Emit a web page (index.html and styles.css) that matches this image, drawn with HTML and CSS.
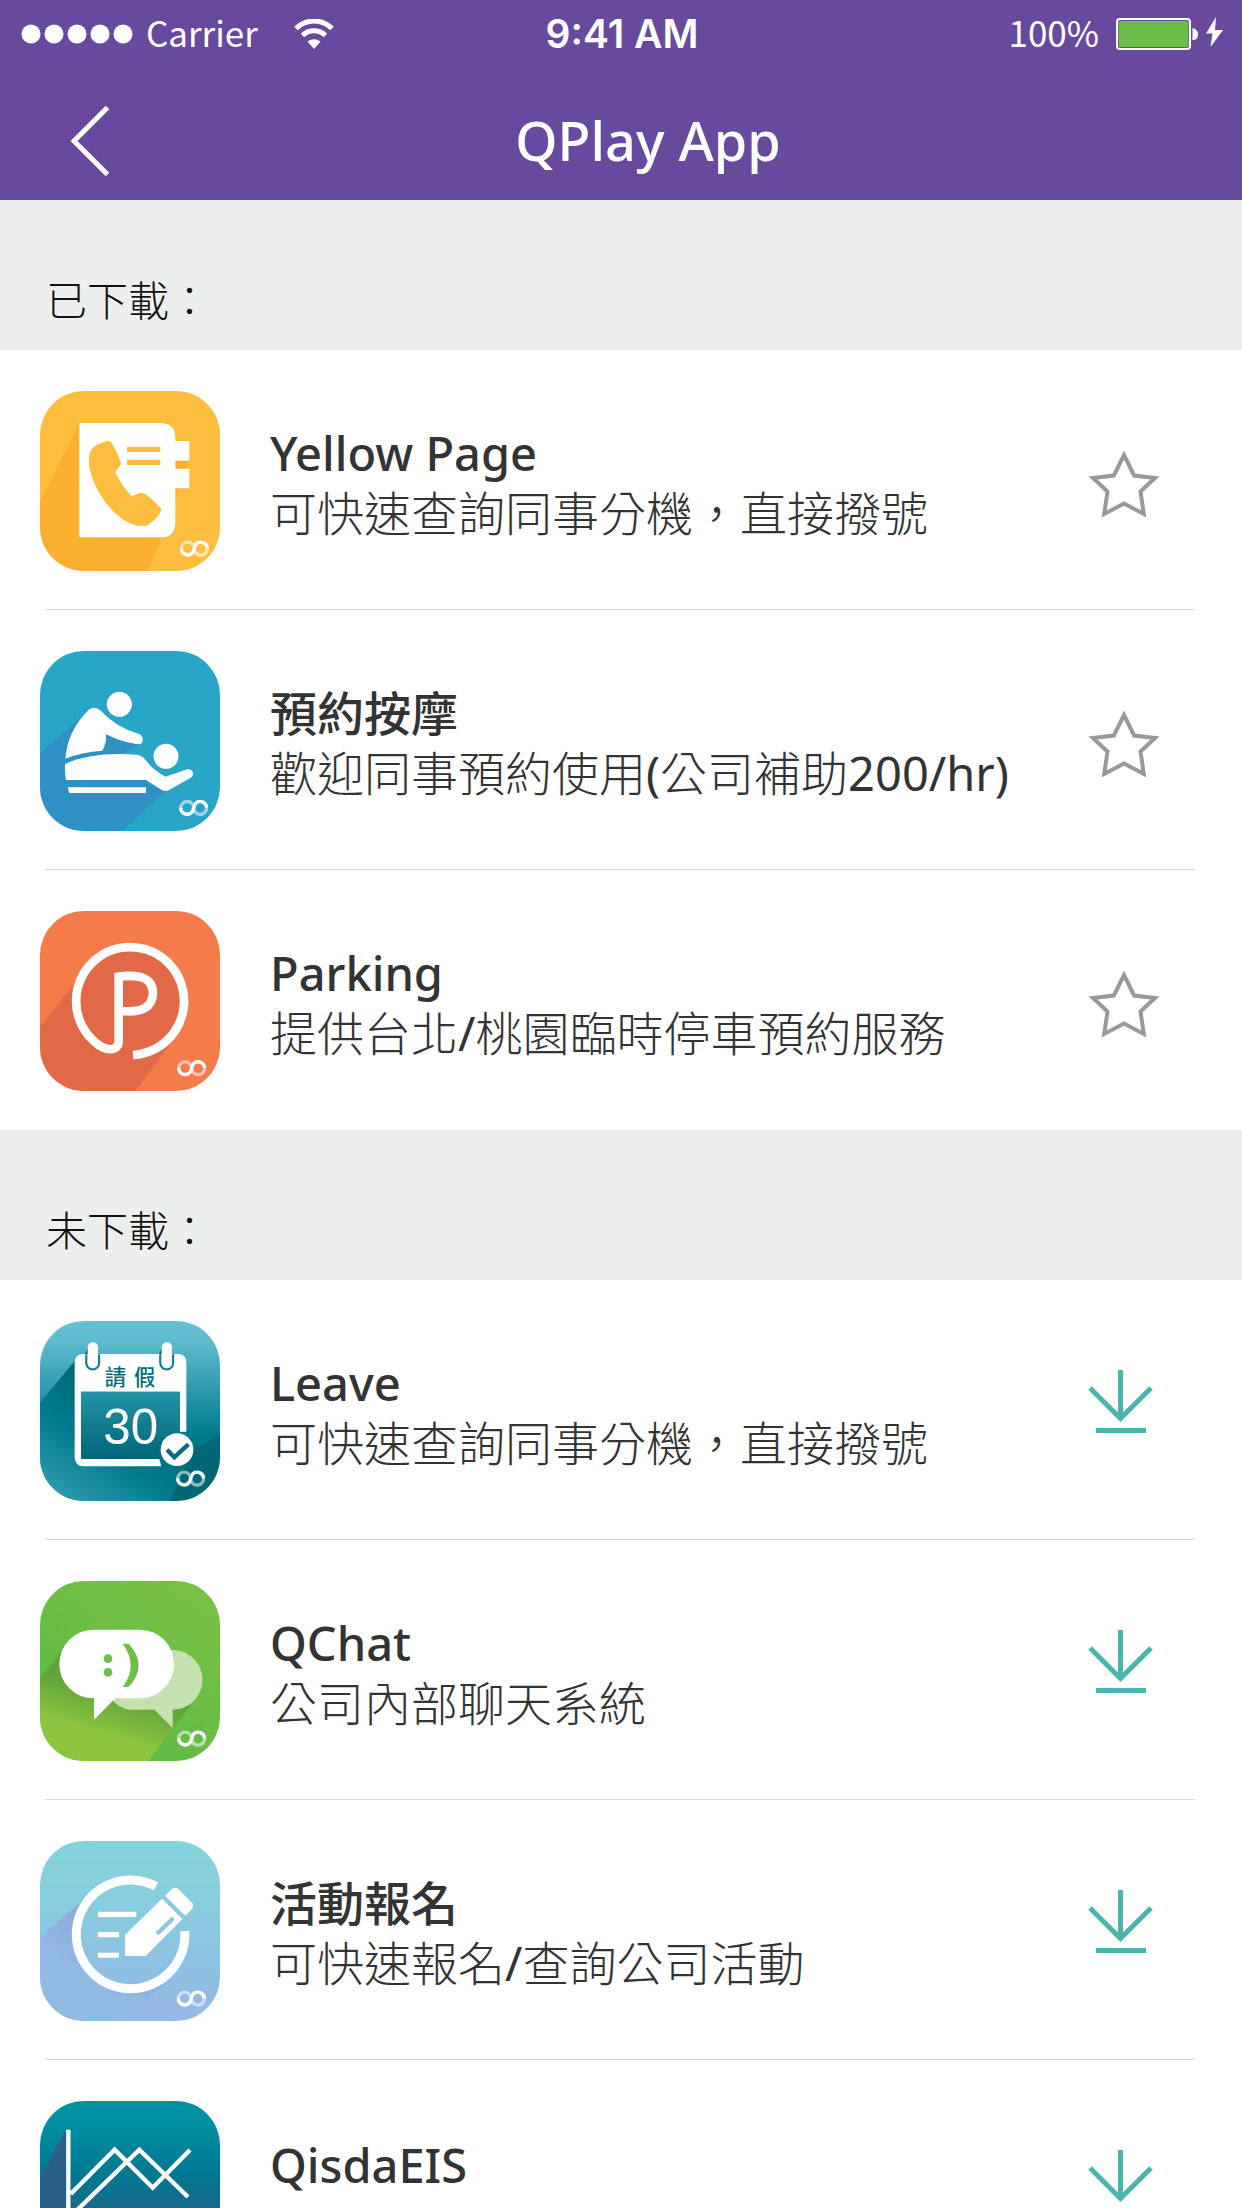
FILE: index.html
```html
<!DOCTYPE html>
<html lang="zh-Hant">
<head>
<meta charset="utf-8">
<meta name="viewport" content="width=device-width, initial-scale=1">
<title>QPlay App</title>
<link rel="stylesheet" href="styles.css">
</head>
<body>
<svg class="defs" aria-hidden="true">
  <symbol id="loop" viewBox="0 0 88 50">
    <g fill="none" stroke="#fff" stroke-width="10">
      <g opacity=".55"><circle cx="24.500" cy="25" r="19.500"/><circle cx="63.500" cy="25" r="19.500"/></g>
      <path d="M5 24A19.500 19.500 0 0 0 38 38C46 30 42 20 50 11A19.500 19.500 0 0 1 83 24"/>
    </g>
  </symbol>
  <symbol id="star" viewBox="0 0 74 84">
    <path d="M37 16L47.200 36.600L68 39L53.500 52.500L56.800 75L37 64.500L17.200 75L20.500 52.500L6 39L26.800 36.600Z" fill="none" stroke="#999" stroke-width="4"/>
  </symbol>
  <symbol id="download" viewBox="0 0 74 84">
    <path d="M33.500 1V49M3 19L33.500 49.500L64 19M9 61.500H59" fill="none" stroke="#4ab5ab" stroke-width="5"/>
  </symbol>
</svg>

<div class="app">
  <header class="header">
    <div class="status">
      <div class="status-side">
        <svg class="signal" viewBox="0 0 114 20" aria-hidden="true"><g fill="#fff"><circle cx="10" cy="10" r="9.500"/><circle cx="33" cy="10" r="9.500"/><circle cx="56" cy="10" r="9.500"/><circle cx="79" cy="10" r="9.500"/><circle cx="102" cy="10" r="9.500"/></g></svg>
        <span class="carrier">Carrier</span>
        <svg class="wifi" viewBox="0 0 40 30" aria-hidden="true"><path d="M2 9.500A25.500 25.500 0 0 1 38 9.500M8.500 16.500A16.500 16.500 0 0 1 31.500 16.500" fill="none" stroke="#fff" stroke-width="5"/><path d="M20 30L13.500 22.500Q20 18 26.500 22.500Z" fill="#fff"/></svg>
      </div>
      <span class="clock">9:41 AM</span>
      <div class="status-side status-end">
        <span class="charge">100%</span>
        <svg class="battery" viewBox="0 0 108 34" aria-hidden="true"><rect x="2" y="2" width="73" height="30" rx="3" fill="none" stroke="#fff" stroke-width="2"/><rect x="3.500" y="4" width="70" height="26" rx="2" fill="#6cbd47"/><path d="M77.500 11Q83 12 83 17.500T77.500 23Z" fill="#fff"/><path d="M101 0L91 16.500H97.500L95.500 30L108 13H100Z" fill="#fff"/></svg>
      </div>
    </div>
    <nav class="navbar">
      <button class="back" aria-label="返回"><svg viewBox="0 0 40 70" aria-hidden="true"><path d="M37.500 1.500L4 35L37.500 68.500" fill="none" stroke="#fff" stroke-width="5"/></svg></button>
      <h1 class="title">QPlay App</h1>
    </nav>
  </header>

  <main class="content">
    <section>
      <h2 class="section-title">已下載：</h2>
      <ul class="list">
        <li class="row">
          <svg class="icon" viewBox="60 60 540 540" aria-hidden="true">
            <rect x="60" y="60" width="540" height="540" fill="#fdbe3f"/>
            <path d="M60 390L178 158L508 268L386 600H60Z" fill="#faaf2f"/>
            <path d="M508 268L600 60V600H386L508 352Z" fill="#fdbe3f"/>
            <path d="M178 156H425Q466 160 466 198V210H508V269H466V293H508V352H466V458Q464 496 428 499H178Z" fill="#fff"/>
            <path d="M321 227H421V243H321ZM321 266H421V282H321Z" fill="#fdbe3f"/>
            <path d="M221 228Q242 213 267 209Q272 211 276 217Q294 248 303 277Q303 282 286 304Q306 346 335 376L357 366Q367 364 378 370Q401 388 424 413Q425 431 384 463Q369 466 351 464Q303 454 256 394Q216 338 207 284V258Q209 239 221 228Z" fill="#fdbe3f"/>
            <use href="#loop" x="479" y="508" width="88" height="50"/>
          </svg>
          <div class="text"><h3 class="name">Yellow Page</h3><p class="desc">可快速查詢同事分機，直接撥號</p></div>
          <button class="action" aria-label="加入最愛"><svg aria-hidden="true"><use href="#star"/></svg></button>
        </li>
        <li class="row">
          <svg class="icon" viewBox="60 63 540 540" aria-hidden="true">
            <rect x="60" y="60" width="540" height="545" fill="#28a5c7"/>
            <path d="M60 370L210 238L350 342L380 380L436 483L305 605H60Z" fill="#2e90c3"/>
            <path d="M355 345L300 376L360 376Q376 384 392 408L436 440L450 330Z" fill="#28a5c7"/>
            <g fill="#fff"><circle cx="298" cy="223" r="37.500"/><circle cx="438" cy="379" r="37.500"/>
            <path d="M206 239Q223 227 239 239Q287 292 358 312Q373 322 366 338Q361 344 347 342Q301 335 258 313Q260 341 247 362Q185 366 136 386Q142 303 206 239Z"/>
            <path d="M135 402Q215 365 350 374Q370 377 382 396Q396 417 436 440L502 418Q517 417 520 431Q519 439 510 445L446 481Q436 486 425 480L378 450H138Q134 427 135 402ZM143 472H378V489H148Z"/></g>
            <use href="#loop" x="477" y="509" width="88" height="50"/>
          </svg>
          <div class="text"><h3 class="name">預約按摩</h3><p class="desc">歡迎同事預約使用<span class="latin">(</span>公司補助<span class="latin">200/hr)</span></p></div>
          <button class="action" aria-label="加入最愛"><svg aria-hidden="true"><use href="#star"/></svg></button>
        </li>
        <li class="row">
          <svg class="icon" viewBox="60 58 540 540" aria-hidden="true">
            <rect x="60" y="58" width="540" height="540" fill="#f57b4b"/>
            <path d="M60 405L164 274L460 445L345 600H60Z" fill="#e16947"/>
            <circle cx="330" cy="328" r="160" fill="#e16947"/>
            <path d="M339 490A162 162 0 1 0 232 457C262 480 296 478 296 448V255Q398 241 399 304Q397 367 306 358" fill="none" stroke="#fff" stroke-width="26"/>
            <use href="#loop" x="471" y="505" width="88" height="50"/>
          </svg>
          <div class="text"><h3 class="name">Parking</h3><p class="desc">提供台北<span class="latin">/</span>桃園臨時停車預約服務</p></div>
          <button class="action" aria-label="加入最愛"><svg aria-hidden="true"><use href="#star"/></svg></button>
        </li>
      </ul>
    </section>

    <section>
      <h2 class="section-title">未下載：</h2>
      <ul class="list">
        <li class="row">
          <svg class="icon" viewBox="60 60 540 540" aria-hidden="true">
            <defs>
              <linearGradient id="leave-bg" x2="0" y2="1"><stop stop-color="#65c1d4"/><stop offset=".12" stop-color="#5ebacd"/><stop offset=".62" stop-color="#007c8e"/><stop offset=".8" stop-color="#006978"/></linearGradient>
              <linearGradient id="leave-shade" x1=".6" y1=".3" x2=".1" y2="1"><stop stop-color="#006878"/><stop offset=".45" stop-color="#007b8c"/><stop offset="1" stop-color="#329db2"/></linearGradient>
              <linearGradient id="leave-page" x2="0" y2="1"><stop stop-color="#2493a6"/><stop offset="1" stop-color="#006576"/></linearGradient>
            </defs>
            <rect x="60" y="60" width="540" height="540" fill="url(#leave-bg)"/>
            <path d="M60 305L164 180L520 450L450 600H60Z" fill="url(#leave-shade)"/>
            <path d="M520 450L600 400V600H450L505 482Z" fill="#006777"/>
            <path d="M195 159L204 140V165ZM417 159L426 140V165Z" fill="#006978"/>
            <path d="M188 159H476Q499 161 499 184V392H480V272H183V474H418L424 496H190Q165 494 164 470V184Q165 160 188 159Z" fill="#fff"/>
            <path d="M183 272H480V396Q420 398 416 450L418 474H190L183 468Z" fill="url(#leave-page)"/>
            <g fill="#fff" stroke="#117d91" stroke-width="7"><path d="M199 160V186A19 19 0 0 0 237 186V160M421 160V186A19 19 0 0 0 459 186V160"/></g>
            <rect x="203" y="124" width="31" height="78" rx="15" fill="#fff"/><rect x="425" y="124" width="31" height="78" rx="15" fill="#fff"/>
            <text class="leave-word" x="254" y="251">請</text><text class="leave-word" x="342" y="251">假</text>
            <text class="leave-day" x="332" y="428">30</text>
            <circle cx="471" cy="446" r="49" fill="#fff"/><path d="M441 446L463 469L505 430" fill="none" stroke="#006d7d" stroke-width="13"/>
            <use href="#loop" x="468" y="508" width="88" height="50"/>
          </svg>
          <div class="text"><h3 class="name">Leave</h3><p class="desc">可快速查詢同事分機，直接撥號</p></div>
          <button class="action" aria-label="下載"><svg aria-hidden="true"><use href="#download"/></svg></button>
        </li>
        <li class="row">
          <svg class="icon" viewBox="60 61 540 540" aria-hidden="true">
            <defs>
              <linearGradient id="chat-bg" x1="1" y1="0" x2=".3" y2="1"><stop stop-color="#7ac143"/><stop offset=".5" stop-color="#6dbe45"/><stop offset="1" stop-color="#58b947"/></linearGradient>
              <linearGradient id="chat-shade" x1=".65" y1=".35" x2=".4" y2="1"><stop stop-color="#5ea33a"/><stop offset=".2" stop-color="#65a83b"/><stop offset=".65" stop-color="#8bc53f"/></linearGradient>
            </defs>
            <rect x="60" y="60" width="540" height="545" fill="url(#chat-bg)"/>
            <path d="M60 355L130 265L512 434L382 605H60Z" fill="url(#chat-shade)"/>
            <path d="M440 268H460A88 89 0 0 1 458 447V502L403 447H330Q295 444 275 415Z" fill="#c5e1af"/>
            <path d="M440 347L541 376" stroke="#d0e7bd" stroke-width="2"/>
            <path d="M220 207H360A102 103 0 0 1 360 413H286L222 477V413H220A102 103 0 0 1 220 207Z" fill="#fff"/>
            <g fill="#6dbe45"><circle cx="264" cy="294" r="13"/><circle cx="264" cy="335" r="13"/><path d="M308 249H326Q386 314 326 379H308Q356 315 308 249Z"/></g>
            <use href="#loop" x="471" y="509" width="88" height="50"/>
          </svg>
          <div class="text"><h3 class="name">QChat</h3><p class="desc">公司內部聊天系統</p></div>
          <button class="action" aria-label="下載"><svg aria-hidden="true"><use href="#download"/></svg></button>
        </li>
        <li class="row">
          <svg class="icon" viewBox="60 58 540 540" aria-hidden="true">
            <defs>
              <linearGradient id="event-bg" gradientUnits="userSpaceOnUse" x1="0" y1="58" x2="0" y2="598"><stop offset=".05" stop-color="#84d3da"/><stop offset=".5" stop-color="#8bc8e1"/><stop offset=".9" stop-color="#93b9e4"/></linearGradient>
              <linearGradient id="event-shade" x1=".75" y1=".4" x2=".5" y2=".75"><stop stop-color="#8ca9da"/><stop offset="1" stop-color="#92bbe4"/></linearGradient>
            </defs>
            <rect x="60" y="58" width="540" height="540" fill="url(#event-bg)"/>
            <path d="M60 345L185 240L430 490L295 600H60Z" fill="url(#event-shade)"/>
            <circle cx="331" cy="338" r="164" fill="url(#event-bg)"/>
            <path d="M408 194A163 163 0 1 0 494.500 328" fill="none" stroke="#fff" stroke-width="27"/>
            <path d="M234 270H349V286H234ZM234 331H297V347H234ZM234 393H297V408H234Z" fill="#fff"/>
            <path d="M426 231L487 292L377 403H315V340ZM435 222L453 204Q463 194 474 201L519 246V258L496 282Z" fill="#fff"/>
            <path d="M411 337L460 289" stroke="#8cc5e1" stroke-width="13"/>
            <use href="#loop" x="470" y="506" width="88" height="50"/>
          </svg>
          <div class="text"><h3 class="name">活動報名</h3><p class="desc">可快速報名<span class="latin">/</span>查詢公司活動</p></div>
          <button class="action" aria-label="下載"><svg aria-hidden="true"><use href="#download"/></svg></button>
        </li>
        <li class="row">
          <svg class="icon" viewBox="60 118 540 540" aria-hidden="true">
            <defs><linearGradient id="eis-bg" x2="0" y2="1"><stop offset=".1" stop-color="#0092a2"/><stop offset=".4" stop-color="#007891"/><stop offset=".62" stop-color="#1c6889"/><stop offset="1" stop-color="#2a5c84"/></linearGradient></defs>
            <rect x="60" y="118" width="540" height="540" fill="url(#eis-bg)"/>
            <path d="M60 350L138 204V560L400 658H60Z" fill="#2a5f86"/>
            <path d="M145 204V555H515M152 397L284 264L398 378L510 265M152 464L358 264L504 406" fill="none" stroke="#fff" stroke-width="13"/>
            <use href="#loop" x="470" y="566" width="88" height="50"/>
          </svg>
          <div class="text"><h3 class="name">QisdaEIS</h3></div>
          <button class="action" aria-label="下載"><svg aria-hidden="true"><use href="#download"/></svg></button>
        </li>
      </ul>
    </section>
  </main>
</div>
</body>
</html>
```
FILE: styles.css
```css
* {
  box-sizing: border-box;
}

body,
h1,
h2,
h3,
p,
ul {
  margin: 0;
  padding: 0;
}

body {
  background: #fff;
  color: #333;
  font-family: "Noto Sans", "Noto Sans CJK TC", sans-serif;
}

button {
  display: flex;
  padding: 0;
  border: 0;
  background: none;
  cursor: pointer;
}

svg {
  display: block;
  flex: none;
}

.defs {
  position: absolute;
  width: 0;
  height: 0;
}

.app {
  display: flex;
  flex-direction: column;
  height: 100vh;
}

.header {
  flex: none;
  background: #67499d;
  color: #fff;
}

.status {
  display: grid;
  grid-template-columns: 1fr auto 1fr;
  align-items: center;
  height: 68px;
  padding: 0 19px 0 21px;
  font-family: "Noto Sans CJK TC", sans-serif;
  font-size: 35px;
  line-height: 64px;
}

.status-side {
  display: flex;
  align-items: center;
}

.status-end {
  justify-content: flex-end;
  gap: 16px;
}

.carrier,
.charge {
  height: 68px;
}

.signal {
  width: 114px;
  height: 20px;
}

.carrier {
  margin: 0 36px 0 11px;
}

.wifi {
  width: 40px;
  height: 30px;
}

.clock {
  font-family: Inter, sans-serif;
  font-size: 39px;
  font-weight: 600;
}

.battery {
  width: 108px;
  height: 34px;
}

.navbar {
  display: grid;
  grid-template-columns: 130px 1fr 76px;
  align-items: center;
  height: 132px;
}

.back {
  justify-content: flex-end;
  padding: 14px 20px 0 0;
}

.back svg {
  width: 40px;
  height: 70px;
}

.title {
  font-size: 54px;
  font-weight: 500;
  line-height: 76px;
  text-align: center;
  padding-top: 12px;
}

.content {
  flex: 1;
  overflow-y: auto;
  scrollbar-width: none;
}

.section-title {
  display: flex;
  align-items: flex-end;
  height: 150px;
  padding: 0 46px 20px;
  background: #edefee;
  color: #111;
  font-size: 41px;
  font-weight: 300;
  line-height: 60px;
}

.list {
  list-style: none;
}

.row {
  display: flex;
  align-items: center;
  height: 260px;
  margin: 0 47px 0 45px;
  padding-top: 2px;
  border-bottom: 1px solid #d8d8d8;
}

.row:last-child {
  border-bottom-color: transparent;
}

.icon {
  width: 180px;
  height: 180px;
  margin: 0 50px 0 -5px;
  border-radius: 44px;
}

.text {
  flex: 1;
  min-height: 120px;
  padding-top: 4px;
  line-height: 60px;
}

.name {
  font-size: 47px;
  font-weight: 500;
}

.desc {
  font-size: 47px;
  font-weight: 300;
}

.latin {
  font-weight: 400;
}

.action {
  margin-right: 34px;
}

.action svg {
  width: 74px;
  height: 84px;
}

.leave-word {
  fill: #006d7d;
  font-family: "Noto Sans CJK TC", sans-serif;
  font-size: 64px;
  font-weight: 500;
}

.leave-day {
  fill: #fff;
  font-family: "Liberation Sans", sans-serif;
  font-size: 148px;
  text-anchor: middle;
}
```
